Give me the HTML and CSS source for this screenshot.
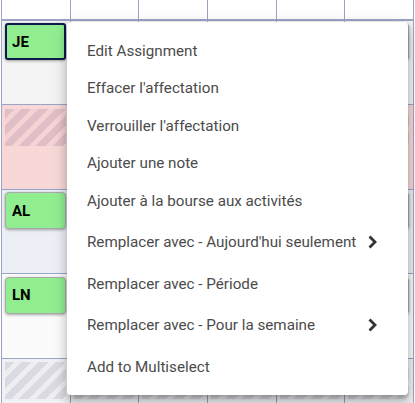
FILE: index.html
```html
<!DOCTYPE html>
<html>
<head>
<meta charset="utf-8">
<link rel="stylesheet" href="styles.css">
</head>
<body>
<div class="grid">
  <div class="cell head"></div><div class="cell head"></div><div class="cell head"></div><div class="cell head"></div><div class="cell head"></div><div class="cell head"></div>

  <div class="cell r1"><div class="card green selected">JE</div></div>
  <div class="cell r1"></div>
  <div class="cell r1"><div class="card green"></div></div>
  <div class="cell r1"></div>
  <div class="cell r1"><div class="card green"></div></div>
  <div class="cell r1"><div class="card orange-red"></div></div>

  <div class="cell r2"><div class="block stripes-pink"></div></div>
  <div class="cell r2"><div class="block stripes-pink"></div></div>
  <div class="cell r2"><div class="block stripes-pink"></div></div>
  <div class="cell r2"><div class="block stripes-pink"></div></div>
  <div class="cell r2"><div class="block stripes-pink"></div></div>
  <div class="cell r2"><div class="block stripes-pink"></div></div>

  <div class="cell r3"><div class="card green">AL</div></div>
  <div class="cell r3"></div>
  <div class="cell r3"></div>
  <div class="cell r3"></div>
  <div class="cell r3"></div>
  <div class="cell r3"><div class="card orange"></div></div>

  <div class="cell r4"><div class="card green">LN</div></div>
  <div class="cell r4"></div>
  <div class="cell r4"></div>
  <div class="cell r4"></div>
  <div class="cell r4"></div>
  <div class="cell r4"><div class="card orange"></div></div>

  <div class="cell r5"><div class="block stripes-gray"></div></div>
  <div class="cell r5"><div class="block stripes-gray"></div></div>
  <div class="cell r5"><div class="block stripes-gray"></div></div>
  <div class="cell r5"><div class="block stripes-gray"></div></div>
  <div class="cell r5"><div class="block stripes-gray"></div></div>
  <div class="cell r5"><div class="block stripes-gray"></div></div>
</div>

<div class="menu">
  <div class="item">Edit Assignment</div>
  <div class="item">Effacer l'affectation</div>
  <div class="item">Verrouiller l'affectation</div>
  <div class="item">Ajouter une note</div>
  <div class="item">Ajouter à la bourse aux activités</div>
  <div class="item sub"><span>Remplacer avec - Aujourd'hui seulement</span>
    <svg class="chev" viewBox="0 0 24 24" width="24" height="24"><path d="M9.5 6.5L15 12l-5.5 5.5"/></svg></div>
  <div class="item">Remplacer avec - Période</div>
  <div class="item sub"><span>Remplacer avec - Pour la semaine</span>
    <svg class="chev" viewBox="0 0 24 24" width="24" height="24"><path d="M9.5 6.5L15 12l-5.5 5.5"/></svg></div>
  <div class="item">Add to Multiselect</div>
</div>
</body>
</html>
```
FILE: styles.css
```css
html, body {
  margin: 0;
  padding: 0;
  background: #ffffff;
  overflow: hidden;
}
body {
  width: 415px;
  height: 403px;
  position: relative;
  font-family: Roboto, "Liberation Sans", sans-serif;
}
.grid {
  margin-left: 1px;
  width: 413px;
  border-left: 1px solid #9ba4c6;
  box-sizing: border-box;
  display: grid;
  grid-template-columns: repeat(6, 1fr);
  grid-template-rows: 20.5px repeat(4, 84.5px) 44px;
}
.cell {
  box-sizing: border-box;
  border-right: 1px solid #9ba4c6;
  border-bottom: 1px solid #9ba4c6;
  padding: 2.5px 3px;
}
.r5 { border-bottom: none; }
.head {
  background: #ffffff;
  border-bottom: 2px solid #9ba4c6;
  padding: 0;
}
.r1 { background: #f3f3f3; }
.r2 { background: #f8d7d7; }
.r3 { background: #eceff6; }
.r4 { background: #fbfbfc; }
.r5 { background: #f1f1f4; }

.card {
  box-sizing: border-box;
  width: 61px;
  height: 37px;
  border-radius: 4px;
  border: 1px solid #a9a9a9;
  box-shadow: 0 1px 3px rgba(0, 0, 0, 0.35);
  display: flex;
  align-items: center;
  padding-left: 6px;
  font-family: Roboto, "Liberation Sans", sans-serif;
  font-weight: 700;
  font-size: 15px;
  color: #000;
}
.green { background: #90ee90; }
.orange-red { background: #ff4500; }
.orange { background: #f07242; }
.selected {
  border: 2px solid #0d1b4a;
  border-radius: 3px;
  padding-left: 5px;
}
.block {
  width: 61px;
  height: 37px;
  margin-top: 1px;
}
.stripes-pink {
  background: repeating-linear-gradient(135deg, #dfbfc5 0 6.5px, #f5d2d3 6.5px 12px);
}
.stripes-gray {
  background: repeating-linear-gradient(135deg, #dadbe2 0 6.5px, #eeeef2 6.5px 12px);
}

.menu {
  position: absolute;
  left: 67px;
  top: 22px;
  width: 341px;
  box-sizing: border-box;
  background: #ffffff;
  border-radius: 4px;
  padding: 10px 0 9px 0;
  box-shadow: 0 5px 5px -3px rgba(0,0,0,0.2), 0 8px 10px 1px rgba(0,0,0,0.14), 0 3px 14px 2px rgba(0,0,0,0.12);
}
.item {
  height: 37.5px;
  display: flex;
  align-items: center;
  padding: 0 24px 0 20px;
  font-size: 15.2px;
  color: #4b4b4b;
  white-space: nowrap;
}
.item.sub {
  height: 45.5px;
  justify-content: space-between;
}
.chev {
  fill: none;
  stroke: #333333;
  stroke-width: 2.8;
  flex: none;
}
```
